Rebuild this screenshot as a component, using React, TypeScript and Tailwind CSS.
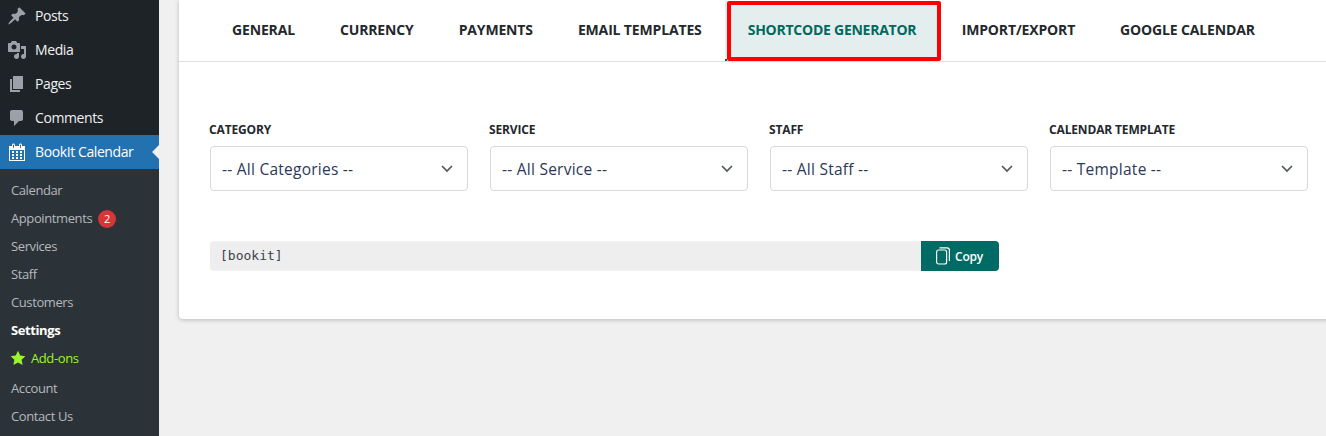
import React from "react";

const font = { fontFamily: '"Open Sans", "Noto Sans", sans-serif' };

const Dash = ({ d, className }: { d: string; className?: string }) => (
  <svg viewBox="0 0 20 20" width="20" height="20" fill="currentColor" className={className}>
    <path d={d} />
  </svg>
);

const menu = [
  { label: "Posts", d: "M10.44 3.02l1.82-1.82 6.36 6.35-1.83 1.82c-1.05-.68-2.48-.57-3.41.36l-.75.75c-.92.93-1.04 2.35-.35 3.41l-1.83 1.82-2.41-2.41-2.8 2.79c-.42.42-3.38 2.71-3.8 2.29s1.86-3.39 2.28-3.81l2.79-2.79L4.1 9.36l1.83-1.82c1.05.69 2.48.57 3.4-.36l.75-.75c.93-.92 1.05-2.35.36-3.41z" },
  { label: "Media", d: "M13 11V4c0-.55-.45-1-1-1h-1.67L9 1H5L3.67 3H2c-.55 0-1 .45-1 1v7c0 .55.45 1 1 1h10c.55 0 1-.45 1-1zM7 4.5c1.38 0 2.5 1.12 2.5 2.5S8.38 9.5 7 9.5 4.5 8.38 4.5 7 5.62 4.5 7 4.5zM14 6h5v10.5c0 1.38-1.12 2.5-2.5 2.5S14 17.88 14 16.5s1.12-2.5 2.5-2.5c.17 0 .34.02.5.05V9h-3V6zm-4 8.05V13h2v3.5c0 1.38-1.12 2.5-2.5 2.5S7 17.88 7 16.5 8.12 14 9.5 14c.17 0 .34.02.5.05z" },
  { label: "Pages", d: "M6 15V2h10v13H6zm-1 1h8v2H3V5h2v11z" },
  { label: "Comments", d: "M5 2h9c1.1 0 2 .9 2 2v7c0 1.1-.9 2-2 2h-2l-5 5v-5H5c-1.1 0-2-.9-2-2V4c0-1.1.9-2 2-2z" },
];
const calendar = "M15 4h3v15H2V4h3V3c0-.41.15-.76.44-1.06.29-.29.65-.44 1.06-.44s.77.15 1.06.44c.29.3.44.65.44 1.06v1h4V3c0-.41.15-.76.44-1.06.29-.29.65-.44 1.06-.44s.77.15 1.06.44c.29.3.44.65.44 1.06v1zM6 3v2.5c0 .14.05.26.15.36.09.09.21.14.35.14s.26-.05.35-.14c.1-.1.15-.22.15-.36V3c0-.14-.05-.26-.15-.35-.09-.1-.21-.15-.35-.15s-.26.05-.35.15c-.1.09-.15.21-.15.35zm7 0v2.5c0 .14.05.26.14.36.1.09.22.14.36.14s.26-.05.36-.14c.09-.1.14-.22.14-.36V3c0-.14-.05-.26-.14-.35-.1-.1-.22-.15-.36-.15s-.26.05-.36.15c-.09.09-.14.21-.14.35zm4 15V8H3v10h14zM7 9v2H5V9h2zm2 0h2v2H9V9zm4 2V9h2v2h-2zm-6 1v2H5v-2h2zm2 0h2v2H9v-2zm4 2v-2h2v2h-2zm-6 1v2H5v-2h2zm4 2H9v-2h2v2zm4 0h-2v-2h2v2z";

const tabs = ["General", "Currency", "Payments", "Email Templates", "Shortcode Generator", "Import/Export", "Google Calendar"];
const selects = [
  ["Category", "-- All Categories --"],
  ["Service", "-- All Service --"],
  ["Staff", "-- All Staff --"],
  ["Calendar Template", "-- Template --"],
];

const Sub = ({ children, className = "h-[28px]" }: { children: React.ReactNode; className?: string }) => (
  <div className={`flex items-center pl-[11px] text-[13px] tracking-[-0.4px] text-[#b4b9be] ${className}`}>{children}</div>
);

export default function App() {
  return (
    <div className="flex h-[436px] w-[1326px] overflow-hidden bg-[#f0f0f0]" style={font}>
      <aside className="w-[159px] shrink-0 bg-[#1d2327]">
        <nav className="-mt-px">
          {menu.map((m) => (
            <div key={m.label} className="flex h-[34px] items-center text-[14px] tracking-[-0.4px] text-[#f0f0f1]">
              <Dash d={m.d} className="ml-[7px] mr-[8px] text-[#9ca1a7]" />
              <span className="-mt-[2px]">{m.label}</span>
            </div>
          ))}
          <div className="relative flex h-[34px] items-center bg-[#2271b1] text-[14px] tracking-[-0.4px] text-white">
            <Dash d={calendar} className="ml-[7px] mr-[8px]" />
            <span className="-mt-[2px]">BookIt Calendar</span>
            <span className="absolute right-0 top-[10px] h-0 w-0 border-y-[7px] border-r-[7px] border-y-transparent border-r-[#f0f0f0]" />
          </div>
        </nav>
        <div className="h-[400px] bg-[#2c3338] pt-[8px]">
          <Sub>Calendar</Sub>
          <Sub>
            Appointments
            <span className="ml-[6px] flex h-[18px] w-[18px] items-center justify-center rounded-full bg-[#d63638] text-[11px] tracking-normal text-white">2</span>
          </Sub>
          <Sub>Services</Sub>
          <Sub>Staff</Sub>
          <Sub>Customers</Sub>
          <Sub className="h-[28px] font-bold !text-white">Settings</Sub>
          <Sub className="h-[28px] !text-[#9cf52a]">
            <svg viewBox="0 0 24 24" width="16" height="16" fill="#9cf52a" className="mr-[5px] -ml-px -mt-[3px]">
              <path d="M12 1l3.4 7.2 7.6 1-5.6 5.4 1.5 7.9-6.9-3.9-6.9 3.9 1.5-7.9L1 9.2l7.6-1z" />
            </svg>
            Add-ons
          </Sub>
          <Sub className="mt-[2px] h-[28px]">Account</Sub>
          <Sub>Contact Us</Sub>
        </div>
      </aside>

      <main className="ml-[20px] -mr-[20px] flex-1 self-start">
        <div className="h-[319px] rounded-bl-[4px] bg-white shadow-[0_1px_4px_rgba(0,0,0,0.22)]">
          <div className="flex h-[62px] border-b border-[#dfdfdf] pl-[30.5px]">
            {tabs.map((t) => {
              const active = t === "Shortcode Generator";
              return (
                <div
                  key={t}
                  className={
                    active
                      ? "relative -mr-[1.5px] ml-[2.5px] mt-px flex h-[60px] w-[214px] shrink-0 items-center rounded-[2px] border-[4px] border-[#fe0000] bg-[#e5eeee] pb-[3px] pl-[17px] text-[14px] font-bold uppercase tracking-[-0.25px] text-[#00695f]"
                      : "flex h-[61px] shrink-0 items-center px-[22.5px] pb-[2px] text-[14px] font-bold uppercase tracking-[-0.15px] text-[#23282d]"
                  }
                >
                  {t}
                  {active && <span className="absolute -left-[6px] -top-[4px] h-[60px] w-[2px] border-b-2 border-[#00695f] bg-[#e5eeee]" />}
                </div>
              );
            })}
          </div>

          <div className="mt-[59px] flex gap-[22px] pl-[31px]">
            {selects.map(([label, value]) => (
              <div key={label} className="w-[258px]">
                <div className="-ml-px mb-[8px] h-[17px] text-[12px] font-bold uppercase leading-[17px] tracking-[-0.15px] text-[#23282d]">{label}</div>
                <div className="flex h-[45px] items-center justify-between rounded-[4px] border border-[#d9d9d9] bg-white pl-[11px] pr-[13px] text-[15.5px] tracking-[0.25px] text-[#2c3858]">
                  <span className="pt-[2px]">{value}</span>
                  <svg width="14" height="14" viewBox="0 0 14 14" fill="none" stroke="#50575e" strokeWidth="1.7">
                    <path d="M2 4l5 5 5-5" />
                  </svg>
                </div>
              </div>
            ))}
          </div>

          <div className="ml-[31px] mt-[50px] flex h-[30px] w-[789px]">
            <div className="flex w-[711px] items-center rounded-l-[4px] bg-[#eeeeee] pl-[10px] text-[13px] text-[#3c434a]" style={{ fontFamily: '"DejaVu Sans Mono", "Liberation Mono", monospace' }}>
              [bookit]
            </div>
            <div className="flex flex-1 items-center gap-[5px] rounded-r-[4px] bg-[#006a64] pl-[15px] text-[12px] font-semibold tracking-[-0.2px] text-white">
              <svg width="14" height="18" viewBox="0 0 14 18" fill="none" stroke="white" strokeWidth="1.2" className="shrink-0">
                <rect x="0.6" y="3" width="10" height="14" rx="2" />
                <path d="M3.5 0.8h7.5a2.4 2.4 0 0 1 2.4 2.4V14" />
              </svg>
              <span className="pt-[2px]">Copy</span>
            </div>
          </div>
        </div>
      </main>
    </div>
  );
}
